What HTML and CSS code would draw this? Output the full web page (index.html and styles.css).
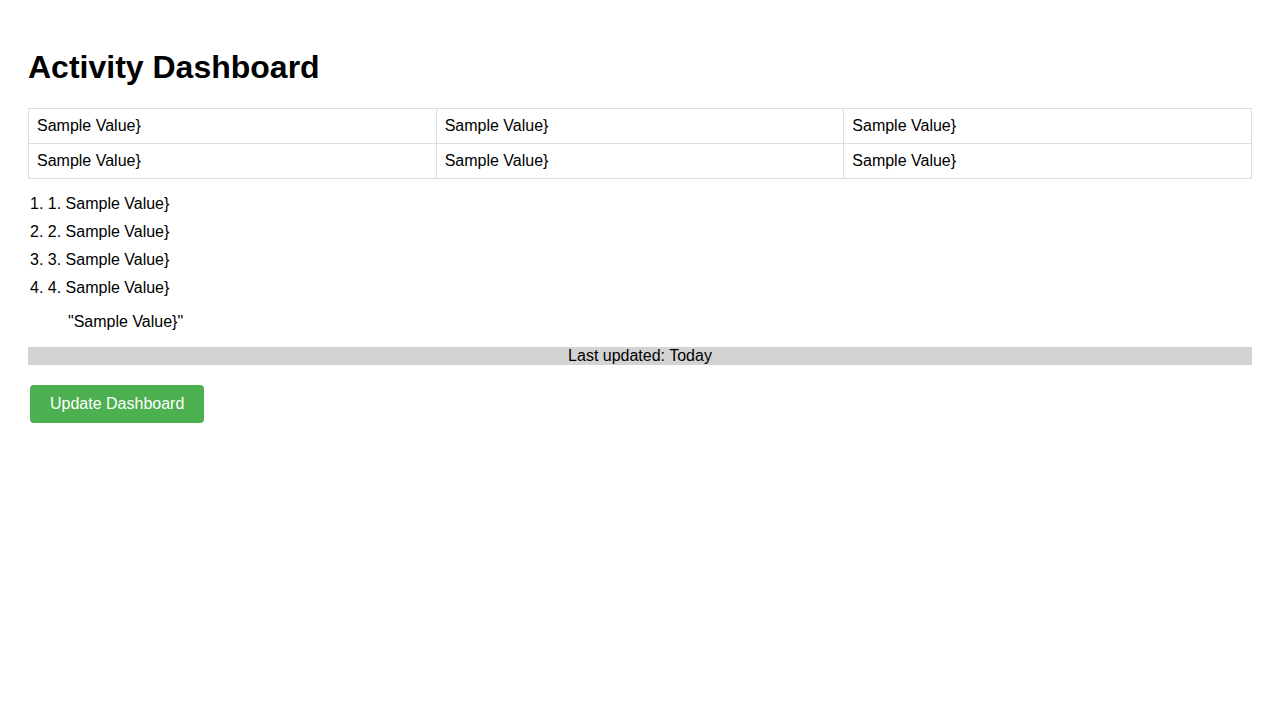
FILE: index.html
```html
<!DOCTYPE html>
<html lang="en">
<head>
<meta charset="utf-8">
<title>Activity Dashboard</title>
<link rel="stylesheet" href="styles.css">
</head>
<body>
<div class="page">
  <h1 class="title">Activity Dashboard</h1>
  <table class="grid">
    <tr><td>Sample Value}</td><td>Sample Value}</td><td>Sample Value}</td></tr>
    <tr><td>Sample Value}</td><td>Sample Value}</td><td>Sample Value}</td></tr>
  </table>
  <ol class="items">
    <li>1. Sample Value}</li>
    <li>2. Sample Value}</li>
    <li>3. Sample Value}</li>
    <li>4. Sample Value}</li>
  </ol>
  <blockquote class="quote">"Sample Value}"</blockquote>
  <div class="status">Last updated: Today</div>
  <button class="btn" type="button">Update Dashboard</button>
</div>
</body>
</html>
```
FILE: styles.css
```css
html, body {
  margin: 0;
  padding: 0;
  background: #fff;
}
body {
  font-family: "Liberation Sans", Arial, sans-serif;
  font-size: 16px;
  color: #000;
}
.page {
  padding: 28px;
}
.title {
  font-size: 32px;
  font-weight: bold;
  margin: 0.67em 0;
}
.grid {
  width: 100%;
  border-collapse: collapse;
  table-layout: fixed;
}
.grid td {
  border: 1px solid #ddd;
  padding: 8px;
}
.items {
  list-style-position: inside;
  padding: 0 0 0 2px;
  margin: 11px 0 0;
}
.items li {
  padding: 5px 0;
}
.quote {
  margin: 11px 40px 16px;
}
.status {
  background: #d3d3d3;
  text-align: center;
}
.btn {
  display: block;
  margin: 20px 2px 0;
  padding: 10px 20px;
  background: #4caf50;
  color: #fff;
  border: none;
  border-radius: 4px;
  font-family: inherit;
  font-size: 16px;
}
```
